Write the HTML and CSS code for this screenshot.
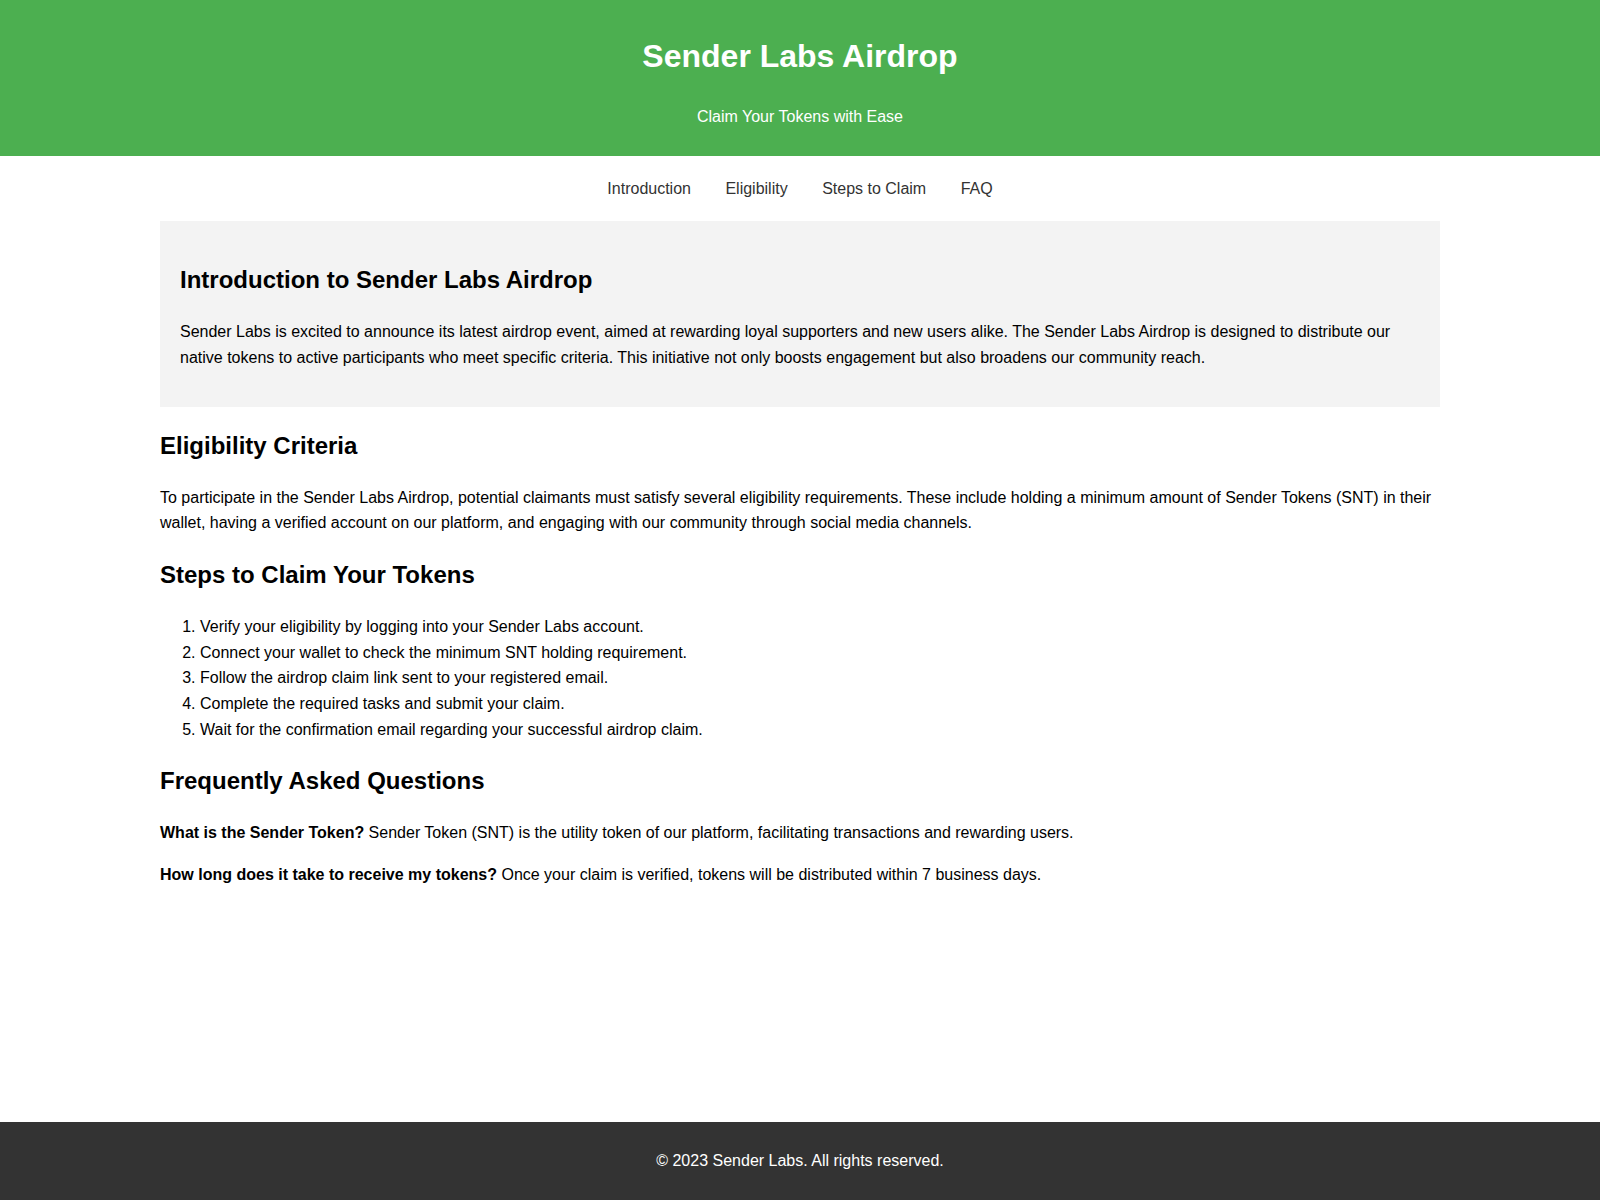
FILE: index.html
```html
<!DOCTYPE html>
<html lang="en">
<head>
  <meta charset="UTF-8">
  <meta name="viewport" content="width=device-width, initial-scale=1.0">
  <title>Sender Labs Airdrop</title>
  <link rel="stylesheet" href="styles.css">
</head>
<body>
  <header>
    <h1>Sender Labs Airdrop</h1>
    <p>Claim Your Tokens with Ease</p>
  </header>

  <nav>
    <a href="#introduction">Introduction</a>
    <a href="#eligibility">Eligibility</a>
    <a href="#steps">Steps to Claim</a>
    <a href="#faq">FAQ</a>
  </nav>

  <main>
    <section id="introduction" class="intro">
      <h2>Introduction to Sender Labs Airdrop</h2>
      <p>Sender Labs is excited to announce its latest airdrop event, aimed at rewarding loyal supporters and new users alike. The Sender Labs Airdrop is designed to distribute our native tokens to active participants who meet specific criteria. This initiative not only boosts engagement but also broadens our community reach.</p>
    </section>

    <section id="eligibility">
      <h2>Eligibility Criteria</h2>
      <p>To participate in the Sender Labs Airdrop, potential claimants must satisfy several eligibility requirements. These include holding a minimum amount of Sender Tokens (SNT) in their wallet, having a verified account on our platform, and engaging with our community through social media channels.</p>
    </section>

    <section id="steps">
      <h2>Steps to Claim Your Tokens</h2>
      <ol>
        <li>Verify your eligibility by logging into your Sender Labs account.</li>
        <li>Connect your wallet to check the minimum SNT holding requirement.</li>
        <li>Follow the airdrop claim link sent to your registered email.</li>
        <li>Complete the required tasks and submit your claim.</li>
        <li>Wait for the confirmation email regarding your successful airdrop claim.</li>
      </ol>
    </section>

    <section id="faq">
      <h2>Frequently Asked Questions</h2>
      <p><strong>What is the Sender Token?</strong> Sender Token (SNT) is the utility token of our platform, facilitating transactions and rewarding users.</p>
      <p><strong>How long does it take to receive my tokens?</strong> Once your claim is verified, tokens will be distributed within 7 business days.</p>
    </section>
  </main>

  <footer>
    <p>&copy; 2023 Sender Labs. All rights reserved.</p>
  </footer>
</body>
</html>
```

FILE: styles.css
```css
body {
  margin: 0;
  font-family: "Liberation Sans", Arial, sans-serif;
  line-height: 1.6;
  color: #000;
  background: #fff;
  min-height: 100vh;
  display: flex;
  flex-direction: column;
}
header {
  background: #4caf50;
  color: white;
  text-align: center;
  padding: 10px 0;
}
nav {
  text-align: center;
  padding: 20px 0;
}
nav a {
  color: #333;
  text-decoration: none;
  margin: 0 15px;
}
main {
  width: 80%;
  margin: 0 auto;
  flex: 1;
}
.intro {
  background: #f3f3f3;
  padding: 20px;
}
footer {
  background: #333;
  color: white;
  text-align: center;
  padding: 10px 0;
}
```
